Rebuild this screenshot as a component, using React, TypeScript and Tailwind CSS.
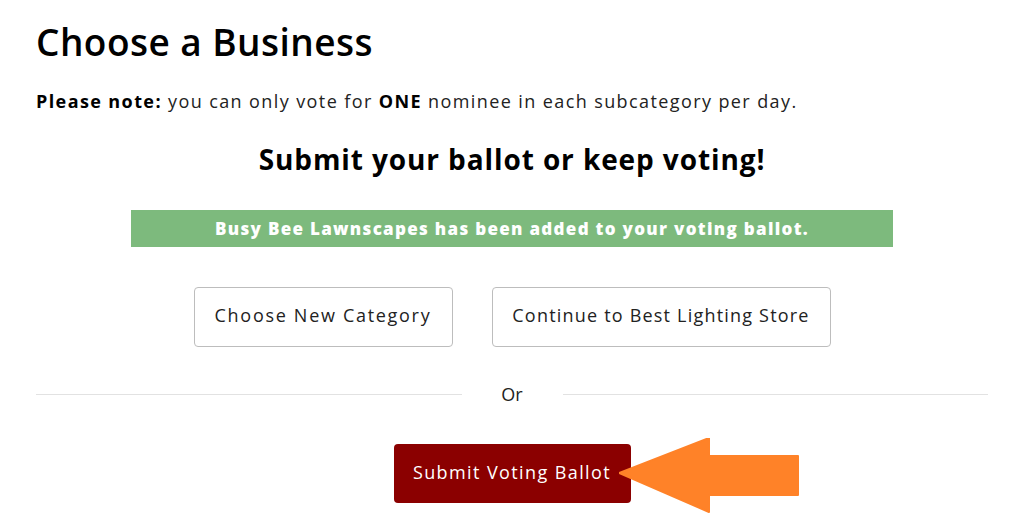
export default function App() {
  return (
    <div className="w-[1024px] h-[520px] overflow-hidden bg-white px-[36px] font-['Open_Sans',sans-serif] text-[#111]">
      <h1 className="mt-[20px] text-[37px] leading-[44px] font-semibold tracking-[0.45px] text-black">
        Choose a Business
      </h1>

      <p className="mt-[24px] text-[18px] leading-[26px] tracking-[1.4px] text-[#222]">
        <span className="font-bold text-black">Please note:</span> you can only vote for{' '}
        <span className="font-bold text-black">ONE</span> nominee in each subcategory per day.
      </p>

      <h2 className="mt-[28px] text-center text-[28px] leading-[34px] font-bold tracking-[0.9px] text-black">
        Submit your ballot or keep voting!
      </h2>

      <div className="mx-auto mt-[34px] flex h-[37px] w-[762px] items-center justify-center bg-[#7dba7d] text-[17px] font-extrabold tracking-[1.3px] text-white">
        Busy Bee Lawnscapes has been added to your voting ballot.
      </div>

      <div className="mt-[40px] flex justify-center gap-[39px]">
        <button className="h-[60px] w-[259px] rounded-[4px] border border-[#bdbdbd] bg-white pb-[4px] text-[18px] tracking-[1.7px] text-[#222]">
          Choose New Category
        </button>
        <button className="h-[60px] w-[339px] rounded-[4px] border border-[#bdbdbd] bg-white pb-[4px] text-[18px] tracking-[1.2px] text-[#222]">
          Continue to Best Lighting Store
        </button>
      </div>

      <div className="mt-[35px] flex items-center">
        <div className="h-px flex-1 bg-[#e2e2e2]" />
        <span className="w-[101px] text-center text-[18px] leading-[24px] text-[#222]">Or</span>
        <div className="h-px flex-1 bg-[#e2e2e2]" />
      </div>

      <div className="mt-[38px] flex justify-center">
        <div className="relative">
          <button className="h-[59px] w-[237px] rounded-[4px] bg-[#8b0000] pb-[2px] text-[18px] tracking-[1.4px] text-white">
            Submit Voting Ballot
          </button>
          <svg
            className="absolute left-[225px] top-[-6px]"
            width="180"
            height="75"
            viewBox="0 0 180 75"
          >
            <polygon
              points="0,35 90,0 90,18 179,18 179,57 90,57 90,74"
              fill="#ff8228"
              stroke="#ff8228"
              strokeWidth="2"
              strokeLinejoin="round"
            />
          </svg>
        </div>
      </div>
    </div>
  )
}
